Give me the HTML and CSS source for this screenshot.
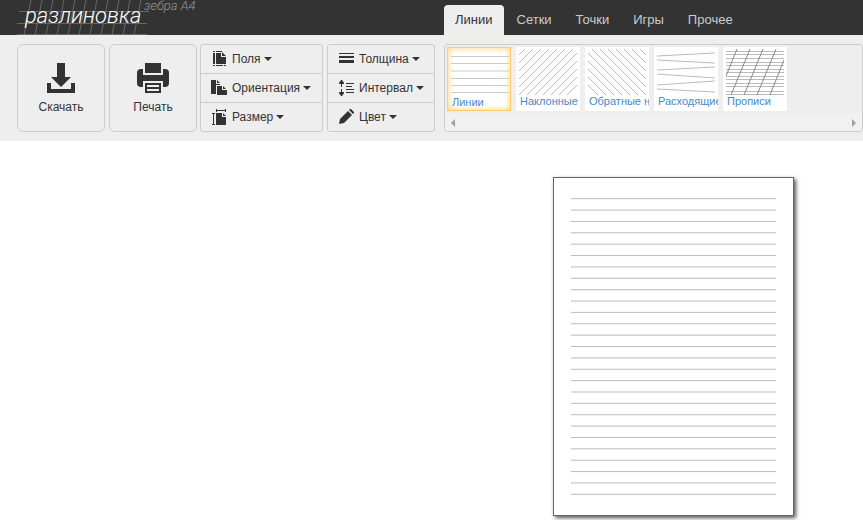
FILE: index.html
```html
<!DOCTYPE html>
<html lang="ru">
<head>
<meta charset="utf-8">
<title>Разлиновка</title>
<link rel="stylesheet" href="styles.css">
</head>
<body>
<header class="top">
  <a class="logo" href="#">
    <svg class="logo-grid" viewBox="0 0 134 35" aria-hidden="true">
      <path d="M2 11.5H132M0 23.5H130M0 34.5H130"/>
      <path d="M14 0 7 35M25 0 18 35M36 0 29 35M47 0 40 35M58 0 51 35M69 0 62 35M80 0 73 35M91 0 84 35M102 0 95 35M113 0 106 35M124 0 117 35"/>
    </svg>
    <span class="logo-name">разлиновка</span>
  </a>
  <span class="subtitle">зебра А4</span>
  <nav class="tabs">
    <a class="tab active" href="#">Линии</a>
    <a class="tab" href="#">Сетки</a>
    <a class="tab" href="#">Точки</a>
    <a class="tab" href="#">Игры</a>
    <a class="tab" href="#">Прочее</a>
  </nav>
</header>
<div class="toolbar">
  <button class="big" type="button">
    <svg width="32" height="32" viewBox="0 0 32 32"><path d="M12 1h8v14h6l-10 10L6 15h6zM2 21h4v6h20v-6h4v10H2z"/></svg>
    Скачать
  </button>
  <button class="big" type="button">
    <svg width="32" height="32" viewBox="0 0 32 32"><path d="M8 1h16v10H8zM0 11q0-4 4-4h2v6h20V7h2q4 0 4 4v10q0 4-4 4h-2v-6H6v6H4q-4 0-4-4z"/><path fill-rule="evenodd" d="M8 21h16v10H8zM10 23v2h12v-2zM10 27v2h12v-2z"/></svg>
    Печать
  </button>
  <div class="group page-group">
    <button class="item" type="button"><svg width="16" height="16" viewBox="0 0 16 16"><path d="M2 0h2v1H2zM5 0h6v1H5zM2 2h2v11H2zM5 2h5v4h4v7H5zM11 1l4 4h-4zM2 14h2v1H2zM5 14h7v1H5zM13 14h2v1h-2zM14 6h1v7h-1z"/></svg>Поля<i class="caret"></i></button>
    <button class="item" type="button"><svg width="16" height="16" viewBox="0 0 16 16"><path d="M0 0h5v4h4v1H5v9H0zM6 0l3 3H6zM6 6h5v4h5v5H6zM12 6l3 3h-3z"/></svg>Ориентация<i class="caret"></i></button>
    <button class="item" type="button"><svg width="16" height="16" viewBox="0 0 16 16"><path d="M5 0h1v1h8V0h1v3h-1V2H6v1H5zM1 4h3v1H3v10h1v1H1v-1h1V5H1zM5 4h6v4h4v8H5zM12 4l3 3h-3z"/></svg>Размер<i class="caret"></i></button>
  </div>
  <div class="group line-group">
    <button class="item" type="button"><svg width="16" height="16" viewBox="0 0 16 16"><path d="M1 2h15v1H1zM1 5h15v2H1zM1 9h15v3H1z"/></svg>Толщина<i class="caret"></i></button>
    <button class="item" type="button"><svg width="16" height="16" viewBox="0 0 16 16"><path d="M3 0h1l2 3v1H4v3H3V4H1V3zM3 9h1v3h2v1l-2 3H3l-2-3v-1h2zM8 3h8v1H8zM8 6h6v1H8zM8 9h8v1H8zM8 12h8v1H8z"/></svg>Интервал<i class="caret"></i></button>
    <button class="item" type="button"><svg width="16" height="16" viewBox="0 0 16 16"><path d="M1 15l1-5 8-8 4 4-8 8zM11 1l1-1h1l3 3v1l-1 1z"/></svg>Цвет<i class="caret"></i></button>
  </div>
  <div class="gallery">
    <div class="thumbs">
      <a class="thumb selected" href="#"><svg class="sample" viewBox="0 0 58 46"><path class="light" d="M0 6.5H58M0 13.5H58M0 21H58M0 28.5H58M0 35.5H58M0 42.5H58"/></svg><span>Линии</span></a>
      <a class="thumb" href="#"><svg class="sample" viewBox="0 0 58 46"><path d="M6 0-40 46M14 0-32 46M22 0-24 46M30 0-16 46M38 0-8 46M46 0 0 46M54 0 8 46M62 0 16 46M70 0 24 46M78 0 32 46M86 0 40 46M94 0 48 46"/></svg><span>Наклонные</span></a>
      <a class="thumb" href="#"><svg class="sample" viewBox="0 0 58 46"><path d="M-36 0 10 46M-28 0 18 46M-20 0 26 46M-12 0 34 46M-4 0 42 46M4 0 50 46M12 0 58 46M20 0 66 46M28 0 74 46M36 0 82 46M44 0 90 46M52 0 98 46"/></svg><span>Обратные наклонные</span></a>
      <a class="thumb" href="#"><svg class="sample" viewBox="0 0 58 46"><path d="M0 7 58 4M0 11 58 14M0 21 58 18M0 25 58 29M0 36 58 32M0 40 58 43"/></svg><span>Расходящиеся</span></a>
      <a class="thumb" href="#"><svg class="sample" viewBox="0 0 58 46"><path d="M0 2.5H58M0 5.5H58M0 9.5H58M0 13.5H58M0 16.5H58M0 20.5H58M0 23.5H58M0 27.5H58M0 30.5H58M0 34.5H58M0 37.5H58M0 42.5H58M0 45.5H58"/><path class="dark" d="M11 0 0 27M24 0 5 46M37 0 18 46M50 0 31 46M58 11 44 46"/></svg><span>Прописи</span></a>
    </div>
    <div class="scrollbar"><i class="arrow left"></i><i class="arrow right"></i></div>
  </div>
</div>
<main class="stage">
  <div class="sheet">
    <svg class="ruling" viewBox="0 0 205 297" role="img" aria-label="Разлинованный лист">
      <path d="M0 .7h205m-205 11.37h205m-205 11.37h205m-205 11.37h205m-205 11.37h205m-205 11.37h205m-205 11.37h205m-205 11.37h205m-205 11.37h205m-205 11.37h205m-205 11.37h205m-205 11.37h205m-205 11.37h205m-205 11.37h205m-205 11.37h205m-205 11.37h205m-205 11.37h205m-205 11.37h205m-205 11.37h205m-205 11.37h205m-205 11.37h205m-205 11.37h205m-205 11.37h205m-205 11.37h205m-205 11.37h205m-205 11.37h205m-205 11.37h205"/>
    </svg>
  </div>
</main>
</body>
</html>
```
FILE: styles.css
```css
* { box-sizing: border-box; }
body {
  min-height: 100vh;
  margin: 0;
  background: #fff;
  color: #333;
  font-family: "Liberation Sans", Arial, sans-serif;
  font-size: 12px;
}
a { text-decoration: none; }
.top {
  display: flex;
  height: 35px;
  background: #333;
  overflow: hidden;
}
.logo {
  display: grid;
  flex: none;
  width: 134px;
  margin-left: 17px;
}
.logo > * { grid-area: 1 / 1; }
.logo-grid { width: 134px; height: 35px; fill: none; stroke: #666; }
.logo-name {
  padding-left: 8px;
  color: #fff;
  font: italic 300 22px/32px Roboto, sans-serif;
}
.subtitle {
  flex: none;
  width: 293px;
  margin-left: -7px;
  color: #999;
  font: italic 300 13px/11px Roboto, sans-serif;
}
.tabs { display: flex; gap: 2px; padding-top: 5px; margin-left: 7px; }
.tab {
  padding: 0 11px;
  color: #ccc;
  font-size: 13px;
  line-height: 30px;
}
.tab.active { background: #eee; color: #333; border-radius: 4px 4px 0 0; }
.toolbar {
  display: flex;
  align-items: flex-start;
  height: 106px;
  padding: 9px 0 0 17px;
  background: #eee;
}
button {
  border: 0;
  padding: 0;
  background: none;
  color: inherit;
  font: inherit;
}
svg { fill: #333; flex: none; }
.big {
  display: flex;
  flex: none;
  flex-direction: column;
  align-items: center;
  gap: 6px;
  width: 88px;
  height: 88px;
  margin-right: 4px;
  padding-top: 17px;
  border: 1px solid #ccc;
  border-radius: 6px;
}
.group {
  flex: none;
  height: 88px;
  margin-right: 4px;
  border: 1px solid #ccc;
  border-radius: 3px;
}
.page-group { width: 123px; margin-left: -1px; }
.line-group { width: 108px; margin-right: 9px; }
.item {
  display: flex;
  align-items: center;
  width: 100%;
  height: 28px;
  padding-left: 10px;
}
.item + .item { height: 29px; border-top: 1px solid #ccc; }
.item svg { margin-right: 5px; }
.caret {
  margin-left: 3px;
  border: 4px solid transparent;
  border-top-color: #333;
  border-bottom: 0;
}
.gallery {
  flex: 1;
  min-width: 0;
  height: 88px;
  border: 1px solid #ccc;
  border-radius: 3px;
  overflow: hidden;
}
.thumbs { display: flex; gap: 5px; height: 69px; padding: 2px; }
.thumb {
  flex: none;
  width: 64px;
  height: 64px;
  padding: 2px 3px;
  background: #fff;
  color: #428bca;
  font-size: 11px;
  line-height: 13px;
  white-space: nowrap;
  overflow: hidden;
}
.thumb span { display: block; padding-left: 1px; }
.thumb.selected {
  padding: 2px;
  padding-left: 3px;
  border: 1px solid #fc6;
  box-shadow: inset 0 0 6px #fc6;
}
.sample { display: block; width: 58px; height: 46px; fill: none; stroke: #bbb; overflow: hidden; }
.sample .light { stroke: #ccc; }
.sample .dark { stroke: #888; }
.scrollbar {
  display: flex;
  justify-content: space-between;
  align-items: center;
  height: 17px;
  padding: 0 6px;
  background: #f1f1f1;
}
.arrow { border: 4px solid transparent; }
.arrow.left { border-left: 0; border-right-color: #a0a0a0; }
.arrow.right { border-right: 0; border-left-color: #a0a0a0; }
.stage { display: flex; justify-content: flex-end; padding: 36px 69px 0 0; }
.sheet {
  padding: 20px 17px;
  border: 1px solid #666;
  background: #fff;
  box-shadow: 2px 2px 4px #555;
}
.ruling { display: block; width: 205px; height: 297px; fill: none; stroke: #bbb; }
```
